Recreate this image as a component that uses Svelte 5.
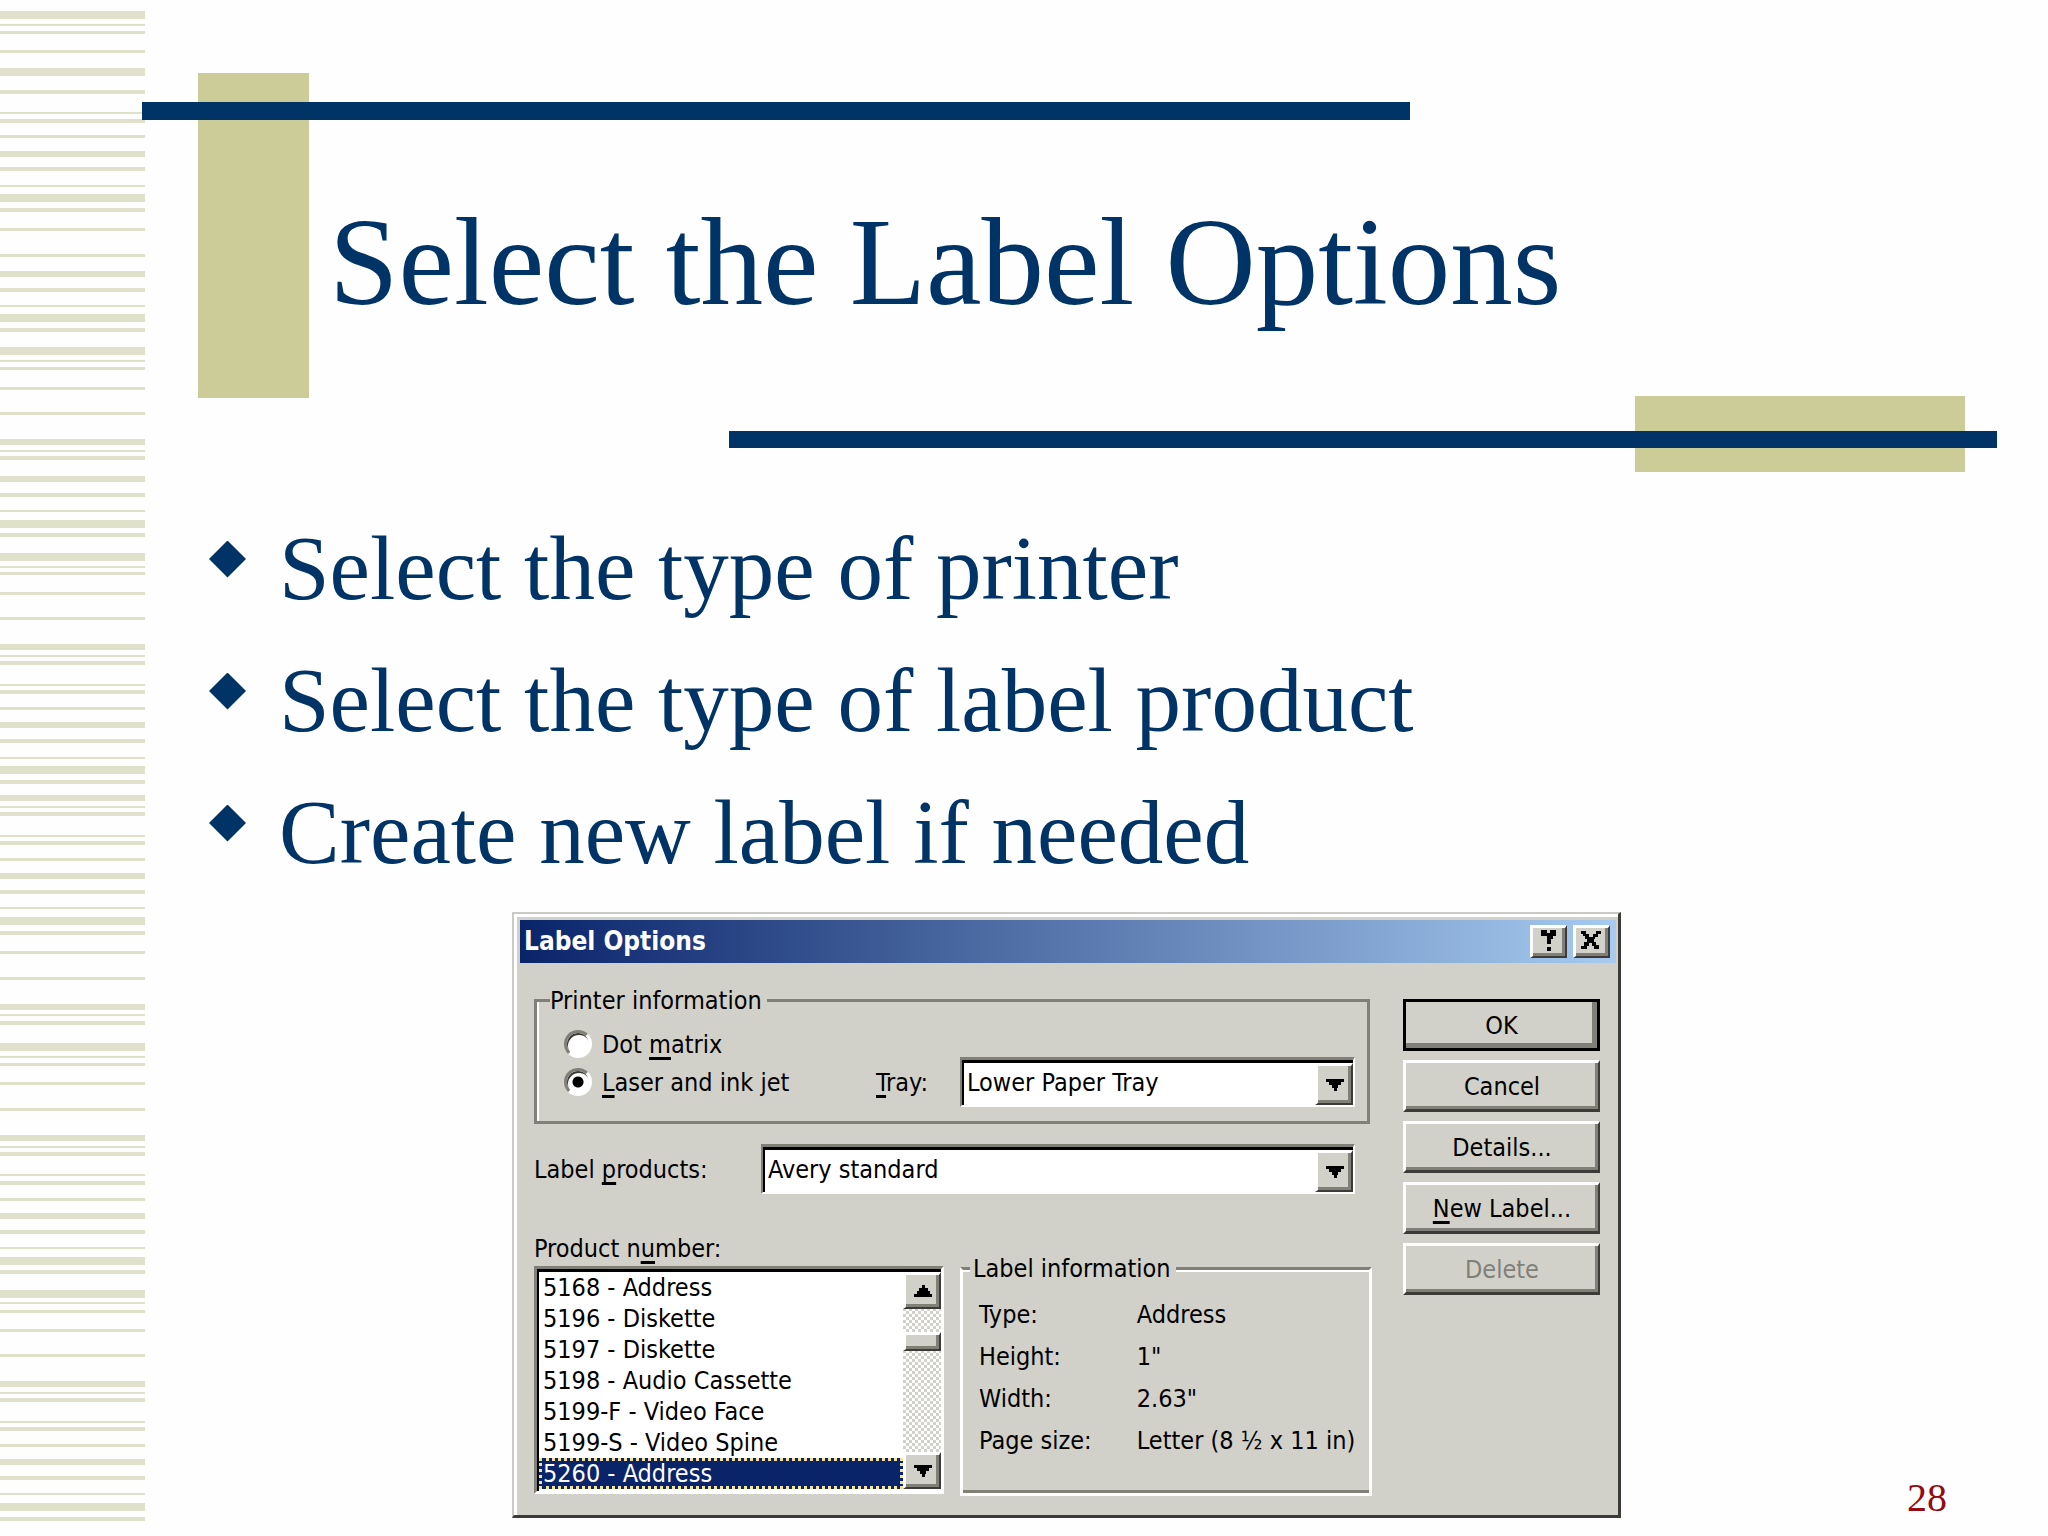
<script>
  // Decorative stripes on the left edge: [top, thickness]
  const stripes = [
    [11, 8], [24, 2], [31, 3], [50, 3], [68, 8], [90, 4], [112, 2], [119, 4], [135, 3], [151, 6],
    [167, 4], [185, 2], [194, 8], [208, 4], [228, 3], [254, 3], [271, 6], [288, 4], [305, 2], [314, 8],
    [328, 4], [347, 8], [360, 2], [367, 3], [387, 3], [412, 3], [439, 6], [450, 2], [456, 4], [476, 6],
    [493, 4], [510, 2], [520, 8], [533, 4], [553, 8], [566, 2], [572, 3], [592, 3], [617, 3], [644, 6],
    [655, 2], [661, 4], [684, 2], [690, 4], [707, 3], [722, 6], [739, 4], [757, 2], [766, 8], [780, 4],
    [795, 6], [806, 2], [812, 4], [835, 2], [841, 4], [858, 3], [873, 6], [890, 4], [907, 2], [917, 8],
    [931, 4], [951, 3], [977, 3], [1004, 6], [1014, 2], [1021, 4], [1043, 8], [1056, 2], [1063, 3],
    [1082, 3], [1108, 3], [1135, 6], [1146, 2], [1152, 4], [1174, 2], [1181, 4], [1198, 3], [1213, 6],
    [1230, 4], [1247, 2], [1257, 8], [1270, 4], [1290, 8], [1302, 2], [1310, 3], [1329, 3], [1354, 3],
    [1381, 6], [1392, 2], [1398, 4], [1421, 2], [1427, 4], [1444, 3], [1459, 6], [1476, 4], [1493, 2],
    [1503, 8], [1517, 4]
  ];

  const points = ['Select the type of printer', 'Select the type of label product', 'Create new label if needed'];

  const products = [
    '5168 - Address',
    '5196 - Diskette',
    '5197 - Diskette',
    '5198 - Audio Cassette',
    '5199-F - Video Face',
    '5199-S - Video Spine',
    '5260 - Address'
  ];
  let selected = $state('5260 - Address');
  let printer = $state('laser');

  const info = [
    ['Type:', 'Address'],
    ['Height:', '1"'],
    ['Width:', '2.63"'],
    ['Page size:', 'Letter (8 ½ x 11 in)']
  ];
</script>

{#snippet arrow(up)}
  <svg width="18" height="12" viewBox="0 0 18 12" shape-rendering="crispEdges" aria-hidden="true">
    {#if up}
      <path d="M8 0h3v3h3v3h2v3h2v3H0V9h3V6h2V3h3z" />
    {:else}
      <path d="M0 0h18v3h-3v3h-3v3h-1v3H8V9H6V6H3V3H0z" />
    {/if}
  </svg>
{/snippet}

<div class="slide">
  <svg class="stripes" width="145" height="1536" shape-rendering="crispEdges" aria-hidden="true">
    {#each stripes as [y, h]}
      <rect x="0" {y} width="145" height={h} />
    {/each}
  </svg>

  <main>
    <header>
      <span class="block tall"></span>
      <span class="block wide"></span>
      <span class="bar upper"></span>
      <span class="bar lower"></span>
      <h1>Select the Label Options</h1>
    </header>

    <ul class="points">
      {#each points as point}
        <li><span class="diamond"></span>{point}</li>
      {/each}
    </ul>

    <div class="bottom">
      <section class="dialog" aria-labelledby="dialog-title">
        <div class="titlebar">
          <h2 id="dialog-title">Label Options</h2>
          <button class="tool" aria-label="Help">
            <svg width="15" height="21" viewBox="0 0 15 21" shape-rendering="crispEdges" aria-hidden="true">
              <path d="M0 0h6v3h3V0h6v6h-3v3h-2v5H6V6H0zM6 17h4v4H6z" />
            </svg>
          </button>
          <button class="tool" aria-label="Close">
            <svg width="20" height="18" viewBox="0 0 20 18" shape-rendering="crispEdges" aria-hidden="true">
              <path d="M0 0h5v3h3v3h4V3h3V0h5v3h-3v3h-3v2h-1v3h2v3h3v4h-5v-3h-2v-3H8v3H6v3H0v-3h3v-4h3V8H4V5H2V3H0z" />
            </svg>
          </button>
        </div>

        <div class="body">
          <div class="fields">
            <fieldset class="printer">
              <legend>Printer information</legend>
              <div class="printer-row">
                <div class="radios">
                  <label><input type="radio" value="dot" bind:group={printer} /><span>Dot <u>m</u>atrix</span></label>
                  <label><input type="radio" value="laser" bind:group={printer} /><span><u>L</u>aser and ink jet</span></label>
                </div>
                <label class="caption" for="tray"><u>T</u>ray:</label>
                <div class="combo">
                  <select id="tray"><option>Lower Paper Tray</option></select>
                  <span class="drop">{@render arrow(false)}</span>
                </div>
              </div>
            </fieldset>

            <div class="product-row">
              <label for="products">Label <u>p</u>roducts:</label>
              <div class="combo">
                <select id="products"><option>Avery standard</option></select>
                <span class="drop">{@render arrow(false)}</span>
              </div>
            </div>

            <div class="lower-row">
              <div class="numbers">
                <span id="number-label">Product n<u>u</u>mber:</span>
                <div class="listbox">
                  <ul role="listbox" aria-labelledby="number-label">
                    {#each products as product}
                      <li role="option" aria-selected={selected === product}>
                        <button class="item" onclick={() => (selected = product)}>{product}</button>
                      </li>
                    {/each}
                  </ul>
                  <div class="scroll">
                    <button class="end" aria-label="Scroll up">{@render arrow(true)}</button>
                    <span class="thumb"></span>
                    <button class="end" aria-label="Scroll down">{@render arrow(false)}</button>
                  </div>
                </div>
              </div>

              <fieldset class="info">
                <legend>Label information</legend>
                <dl>
                  {#each info as [name, value]}
                    <dt>{name}</dt>
                    <dd>{value}</dd>
                  {/each}
                </dl>
              </fieldset>
            </div>
          </div>

          <div class="actions">
            <button class="push default">OK</button>
            <button class="push">Cancel</button>
            <button class="push">Details...</button>
            <button class="push"><span><u>N</u>ew Label...</span></button>
            <button class="push" disabled>Delete</button>
          </div>
        </div>
      </section>
      <span class="page-number">28</span>
    </div>
  </main>
</div>

<style>
  :global(body) {
    margin: 0;
    background: #fefefe;
  }

  .slide {
    --navy: #003366;
    --khaki: #cccc99;
    --face: #d2d1c9;
    --shade: #808079;
    --dark: #3c3b37;
    display: grid;
    grid-template-columns: 142px 1fr;
    min-height: 100vh;
    overflow: hidden;
    color: var(--navy);
    font-family: "Liberation Serif", "Times New Roman", serif;
  }
  .stripes {
    display: block;
    fill: #e0e1ca;
  }
  main {
    position: relative;
    min-width: 0;
  }

  header {
    display: grid;
    grid-template-columns: 56fr 111fr 420fr 681fr 225fr 330fr 32fr 51fr;
    grid-template-rows: 73px 29px 18px 276px 2px 33px 17px 24px;
  }
  .block {
    background: var(--khaki);
  }
  .bar {
    background: var(--navy);
  }
  .tall {
    grid-area: 2 / 2 / 6 / 3;
  }
  .wide {
    grid-area: 5 / 6 / 9 / 7;
  }
  .upper {
    grid-area: 3 / 1 / 4 / 5;
  }
  .lower {
    grid-area: 7 / 4 / 8 / 8;
  }
  h1 {
    grid-area: 4 / 3 / 5 / 7;
    margin: 0;
    padding: 70px 0 0 20px;
    font-size: 125px;
    font-weight: 400;
    line-height: 144px;
    white-space: nowrap;
  }

  ul {
    margin: 0;
    padding: 0;
    list-style: none;
  }
  .points {
    padding: 31px 0 13px 67px;
    font-size: 91px;
    line-height: 132px;
  }
  .points li {
    display: flex;
    align-items: center;
    gap: 33px;
  }
  .diamond {
    flex: none;
    width: 37px;
    height: 37px;
    margin-bottom: 20px;
    background: var(--navy);
    clip-path: polygon(50% 0, 100% 50%, 50% 100%, 0 50%);
  }

  .bottom {
    display: grid;
    grid-template-columns: 370fr 1109fr 326fr 101fr;
  }
  .page-number {
    grid-column: 3;
    align-self: end;
    justify-self: end;
    color: #930a12;
    font-size: 40px;
    line-height: 40px;
  }

  .dialog {
    grid-column: 2;
    box-sizing: border-box;
    padding: 6px 2px 0 6px;
    border: solid var(--dark);
    border-width: 2px 3px 3px 2px;
    border-top-color: #cbcac7;
    border-left-color: #cbcac7;
    background: var(--face);
    box-shadow: inset 3px 3px 0 #fff;
    color: #000;
    font-family: "DejaVu Sans Condensed", "Liberation Sans", sans-serif;
    font-size: 25px;
    line-height: 31px;
    white-space: nowrap;
  }
  button,
  select {
    margin: 0;
    padding: 0;
    border: 0;
    border-radius: 0;
    color: inherit;
    font: inherit;
  }
  u {
    text-underline-offset: 4px;
    text-decoration-thickness: 3px;
    text-decoration-skip-ink: none;
  }

  .titlebar {
    display: flex;
    align-items: center;
    gap: 6px;
    height: 43px;
    padding: 0 6px 0 4px;
    background: linear-gradient(90deg, #0a246a, #a6caf0);
  }
  h2 {
    flex: 1;
    margin: 0;
    color: #fff;
    font-size: 26px;
    font-weight: 700;
    line-height: 31px;
  }
  .tool,
  .drop,
  .end,
  .thumb {
    display: flex;
    align-items: center;
    justify-content: center;
    box-sizing: border-box;
    border: solid var(--dark);
    border-width: 3px 2px 2px 3px;
    border-top-color: #fff;
    border-left-color: #fff;
    background: var(--face);
    box-shadow: inset -3px -3px 0 var(--shade);
  }
  .tool {
    width: 37px;
    height: 33px;
    padding: 0 2px 4px 0;
  }

  .body {
    display: grid;
    grid-template-columns: 838fr 197fr;
    gap: 31px;
    padding: 22px 16px 19px 14px;
  }
  fieldset {
    min-width: 0;
    margin: 0;
    border: 3px solid var(--shade);
  }
  legend {
    padding: 0 5px 0 0;
    background: var(--face);
  }
  .printer {
    margin-right: 2px;
    padding: 9px 12px 14px 13px;
    box-shadow: inset 2px 0 0 #fff;
  }
  .printer-row {
    display: grid;
    grid-template-columns: 312fr 84fr 395fr;
    align-items: end;
    margin-left: 14px;
  }
  .radios {
    padding-bottom: 6px;
  }
  .radios label {
    display: flex;
    align-items: center;
    gap: 10px;
    height: 38px;
  }
  .radios input {
    box-sizing: border-box;
    width: 28px;
    height: 28px;
    margin: 0;
    appearance: none;
    border: 3px solid #fff;
    border-top-color: var(--shade);
    border-left-color: var(--shade);
    border-radius: 50%;
    background: #fff;
    box-shadow: inset 1px 2px 0 var(--dark);
  }
  .radios input:checked {
    background: radial-gradient(circle, #000 5px, #fff 6px);
  }
  .caption {
    padding-bottom: 9px;
  }
  .combo {
    display: grid;
    grid-template-columns: 1fr 38px;
    box-sizing: border-box;
    height: 50px;
    border: 2px solid #fff;
    border-top: 3px solid var(--shade);
    border-left-color: var(--shade);
    background: #fff;
  }
  .combo select {
    grid-area: 1 / 1 / 2 / 3;
    width: 100%;
    padding: 0 0 3px 3px;
    appearance: none;
    border: solid #000;
    border-width: 3px 0 0 2px;
    background: #fff;
  }
  .drop {
    grid-area: 1 / 2;
    margin-top: 3px;
    pointer-events: none;
  }

  .product-row {
    display: grid;
    grid-template-columns: 227fr 594fr;
    align-items: center;
    margin: 20px 17px 39px 0;
  }
  .lower-row {
    display: grid;
    grid-template-columns: 410fr 412fr;
    gap: 16px;
  }
  .numbers {
    padding-bottom: 2px;
  }
  .listbox {
    display: grid;
    grid-template-columns: 1fr 38px;
    margin-top: 2px;
    padding: 3px 0 2px 2px;
    border: 3px solid #fff;
    border-top-color: var(--shade);
    border-left-color: var(--shade);
    background: #fff;
    box-shadow: inset 2px 3px 0 #000;
  }
  .item {
    display: block;
    width: 100%;
    height: 31px;
    padding-left: 4px;
    background: none;
    text-align: left;
  }
  [aria-selected="true"] .item {
    outline: 3px dotted #f3e3a6;
    outline-offset: -3px;
    background: #0a246a;
    color: #fff;
  }
  .scroll {
    display: flex;
    flex-direction: column;
    background: repeating-conic-gradient(#fff 0 25%, var(--face) 0 50%) 0 0 / 6px 6px;
  }
  .end {
    height: 37px;
  }
  .thumb {
    height: 19px;
    margin: 23px 0 auto;
  }

  .info {
    margin-top: 20px;
    padding: 10px 0 0 7px;
    border-color: var(--shade) #fff #fff;
    box-shadow: inset 0 2px 0 #fff, inset 0 -3px 0 var(--shade);
  }
  .info legend {
    padding-left: 3px;
  }
  dl {
    display: grid;
    grid-template-columns: 159fr 234fr;
    margin: 0 0 0 9px;
    line-height: 42px;
  }
  dd {
    margin: 0;
  }

  .actions {
    display: flex;
    flex-direction: column;
    gap: 9px;
    padding-top: 14px;
  }
  .push {
    height: 52px;
    border: solid var(--dark);
    border-width: 3px 2px 3px 3px;
    border-top-color: #fff;
    border-left-color: #fff;
    background: var(--face);
    box-shadow: inset -3px -3px 0 var(--shade);
    text-align: center;
  }
  .default {
    border: 3px solid #000;
    box-shadow: inset -5px -5px 0 var(--shade);
  }
  .push:disabled {
    color: var(--shade);
  }
</style>
